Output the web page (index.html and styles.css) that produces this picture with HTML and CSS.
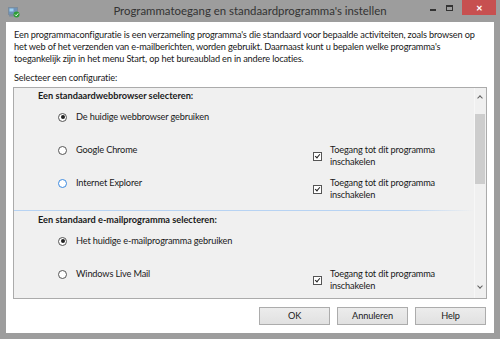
FILE: index.html
```html
<!DOCTYPE html>
<html lang="nl">
<head>
<meta charset="utf-8">
<title>Programmatoegang en standaardprogramma's instellen</title>
<link rel="stylesheet" href="styles.css">
</head>
<body>
<div class="window">
  <div class="titlebar">
    <svg class="app-icon" width="12" height="11" viewBox="0 0 12 11">
      <rect x="0.5" y="0.5" width="9" height="7" fill="#6f93b8" stroke="#7b8c9c"/>
      <rect x="1.5" y="1.5" width="4" height="3" fill="#9ed0f0"/>
      <rect x="1" y="8" width="5" height="1.5" fill="#7b8c9c"/>
      <circle cx="8.5" cy="7.5" r="3" fill="#2e9e35"/>
      <path d="M7 7.6 L8.2 8.8 L10.2 6.4" stroke="#fff" stroke-width="1" fill="none"/>
    </svg>
    <div class="title">Programmatoegang en standaardprogramma's instellen</div>
    <div class="caption-buttons">
      <div class="cap-btn"><span class="min-glyph"></span></div>
      <div class="cap-btn"><span class="max-glyph"></span></div>
      <div class="cap-btn close">&#x2715;</div>
    </div>
  </div>
  <div class="client">
    <p class="intro">Een programmaconfiguratie is een verzameling programma's die standaard voor bepaalde activiteiten, zoals browsen op<br>het web of het verzenden van e-mailberichten, worden gebruikt. Daarnaast kunt u bepalen welke programma's<br>toegankelijk zijn in het menu Start, op het bureaublad en in andere locaties.</p>
    <p class="select-label">Selecteer een configuratie:</p>
    <div class="panel">
      <div class="panel-content">
        <div class="section first">
          <div class="heading">Een standaardwebbrowser selecteren:</div>
          <div class="row">
            <div class="opt"><span class="radio checked"></span><span>De huidige webbrowser gebruiken</span></div>
          </div>
          <div class="row">
            <div class="opt"><span class="radio"></span><span>Google Chrome</span></div>
            <div class="access"><span class="check"></span><span class="access-text">Toegang tot dit programma<br>inschakelen</span></div>
          </div>
          <div class="row">
            <div class="opt"><span class="radio hover"></span><span>Internet Explorer</span></div>
            <div class="access"><span class="check"></span><span class="access-text">Toegang tot dit programma<br>inschakelen</span></div>
          </div>
        </div>
        <div class="separator"></div>
        <div class="section">
          <div class="heading second">Een standaard e-mailprogramma selecteren:</div>
          <div class="row">
            <div class="opt"><span class="radio checked"></span><span>Het huidige e-mailprogramma gebruiken</span></div>
          </div>
          <div class="row">
            <div class="opt"><span class="radio"></span><span>Windows Live Mail</span></div>
            <div class="access"><span class="check"></span><span class="access-text">Toegang tot dit programma<br>inschakelen</span></div>
          </div>
        </div>
      </div>
      <div class="scrollbar">
        <div class="arrow up"></div>
        <div class="track"><div class="thumb"></div></div>
        <div class="arrow down"></div>
      </div>
    </div>
    <div class="buttons">
      <button class="btn">OK</button>
      <button class="btn">Annuleren</button>
      <button class="btn">Help</button>
    </div>
  </div>
</div>
</body>
</html>
```
FILE: styles.css
```css
* { box-sizing: border-box; }
html, body {
  margin: 0;
  padding: 0;
  width: 500px;
  height: 339px;
  overflow: hidden;
}
body {
  font-family: Lato, "Noto Sans", sans-serif;
  font-size: 9.2px;
  letter-spacing: -0.15px;
  color: #1a1a1a;
}
.window {
  width: 500px;
  height: 339px;
  background: #9d9d9d;
  display: flex;
  flex-direction: column;
}
.titlebar {
  height: 22px;
  display: flex;
  align-items: flex-start;
  position: relative;
}
.app-icon {
  margin: 7px 0 0 8px;
}
.title {
  position: absolute;
  left: 0;
  right: 0;
  top: 3px;
  text-align: center;
  font-size: 11.4px;
  letter-spacing: 0;
  color: #333;
  line-height: 16px;
}
.caption-buttons {
  margin-left: auto;
  margin-right: 4px;
  display: flex;
  position: relative;
}
.cap-btn {
  width: 17px;
  height: 15px;
  display: flex;
  align-items: center;
  justify-content: center;
}
.min-glyph {
  width: 6px;
  height: 2px;
  background: #333;
  margin-top: 5px;
}
.max-glyph {
  width: 7px;
  height: 6px;
  border: 1px solid #333;
  border-top-width: 2px;
}
.cap-btn.close {
  width: 34px;
  margin-left: 4px;
  background: #c75050;
  color: #fff;
  font-size: 8px;
  font-weight: bold;
}
.client {
  flex: 1;
  margin: 0 6px 6px 6px;
  background: #fff;
  padding: 7px 8px 0 8px;
  display: flex;
  flex-direction: column;
}
.intro {
  margin: 0;
  line-height: 12px;
  white-space: nowrap;
}
.select-label {
  margin: 7px 0 0 0;
  line-height: 12px;
}
.panel {
  margin: 3px -1px 0 -1px;
  height: 212px;
  border: 1px solid #ababab;
  background: #f0f0f0;
  display: flex;
  overflow: hidden;
}
.panel-content {
  flex: 1;
  overflow: hidden;
}
.section.first {
  padding-top: 2px;
}
.heading {
  font-weight: bold;
  letter-spacing: 0;
  line-height: 12px;
  padding-left: 24px;
  margin-bottom: 9px;
}
.heading.second {
  margin-top: 3px;
  margin-bottom: 9px;
}
.row {
  height: 33px;
  display: flex;
  padding-left: 44px;
  line-height: 12px;
}
.opt {
  width: 255px;
  display: flex;
  align-items: center;
  height: 12px;
}
.radio {
  width: 9px;
  height: 9px;
  border: 1px solid #555;
  border-radius: 50%;
  background: #fff;
  margin-right: 9px;
  position: relative;
  flex: none;
}
.radio.hover {
  border-color: #3c8ae0;
}
.radio.checked::after {
  content: "";
  position: absolute;
  left: 1.5px;
  top: 1.5px;
  width: 4px;
  height: 4px;
  border-radius: 50%;
  background: #222;
}
.access {
  display: flex;
  align-items: center;
  height: 24px;
}
.check {
  width: 9px;
  height: 9px;
  border: 1px solid #555;
  background: #fff;
  margin-right: 8px;
  position: relative;
  flex: none;
}
.check::after {
  content: "";
  position: absolute;
  left: 2px;
  top: 0px;
  width: 2px;
  height: 4px;
  border: solid #222;
  border-width: 0 1.5px 1.5px 0;
  transform: rotate(40deg);
}
.access-text {
  line-height: 12px;
}
.separator {
  height: 1px;
  background: linear-gradient(to right, #b7d3f3 0%, #b7d3f3 85%, rgba(183,211,243,0) 100%);
}
.scrollbar {
  width: 12px;
  flex: none;
  background: #f0f0f0;
  border-left: 1px solid #f7f7f7;
  display: flex;
  flex-direction: column;
}
.arrow {
  height: 17px;
  position: relative;
}
.arrow::after {
  content: "";
  position: absolute;
  left: 3px;
  width: 3px;
  height: 3px;
  border: solid #606060;
  border-width: 1px 0 0 1px;
}
.arrow.up::after {
  top: 8px;
  transform: rotate(45deg);
}
.arrow.down::after {
  top: 3px;
  transform: rotate(225deg);
}
.arrow.down {
  margin-top: auto;
}
.track {
  flex: 1;
  padding-top: 9px;
}
.thumb {
  height: 70px;
  background: #cdcdcd;
  margin: 0 1px 0 0;
}
.buttons {
  margin-top: 8px;
  display: flex;
  justify-content: flex-end;
  gap: 7px;
}
.btn {
  width: 71px;
  height: 18px;
  border: 1px solid #acacac;
  background: linear-gradient(#ececec, #e1e1e1);
  font-family: inherit;
  font-size: 9.2px;
  letter-spacing: -0.1px;
  color: #1a1a1a;
  padding: 0;
  line-height: 16px;
}
```
